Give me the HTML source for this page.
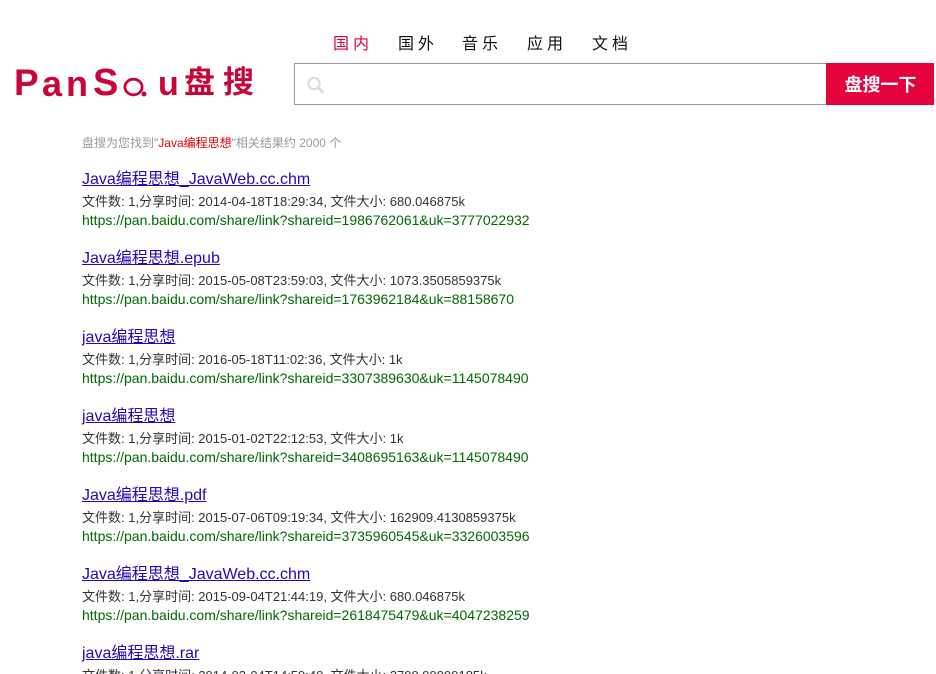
<!DOCTYPE html>
<html lang="zh">
<head>
<meta charset="utf-8">
<title>盘搜</title>
<style>
html,body{margin:0;padding:0;background:#fff;width:936px;height:674px;overflow:hidden;}
#p{width:936px;height:674px;overflow:hidden;position:relative;font-family:"Liberation Sans","Noto Sans CJK SC",sans-serif;}
.a{position:absolute;white-space:nowrap;}
.nav{font-size:16px;letter-spacing:4px;top:35px;line-height:20px;color:#111;}
.logo{color:#c8063a;font-weight:bold;font-size:36px;line-height:40px;top:64px;}
.cjk{font-size:31px;top:63px;line-height:33px;color:#c8063a;font-weight:bold;font-family:"Noto Sans CJK SC",sans-serif;}
.t{left:82px;font-size:16px;line-height:20px;color:#200bb5;text-decoration:underline;}
.m{left:82px;font-size:13px;line-height:16px;color:#333;}
.u{left:82px;font-size:14px;line-height:18px;color:#006a00;}
</style>
</head>
<body>
<div id="p">
<span class="a logo" style="left:14px;font-size:37px;top:63px;">P</span>
<span class="a logo" style="left:42px;">a</span>
<span class="a logo" style="left:66px;">n</span>
<span class="a logo" style="left:93px;font-size:38px;top:63px;">S</span>
<svg class="a" style="left:120px;top:70px;" width="32" height="32" viewBox="0 0 32 32">
<ellipse cx="13.5" cy="17" rx="8.6" ry="7.8" fill="none" stroke="#c8063a" stroke-width="2.8"/>
<circle cx="24" cy="24" r="2.5" fill="#c8063a"/>
</svg>
<span class="a logo" style="left:158px;font-size:34px;">u</span>
<span class="a cjk" style="left:184px;">盘</span>
<span class="a cjk" style="left:223px;">搜</span>

<span class="a nav" style="left:333px;color:#d6073e;">国内</span>
<span class="a nav" style="left:398px;">国外</span>
<span class="a nav" style="left:462px;">音乐</span>
<span class="a nav" style="left:527px;">应用</span>
<span class="a nav" style="left:592px;">文档</span>

<div class="a" style="left:294px;top:63px;width:532px;height:40px;border:1px solid #999;border-right:none;"></div>
<svg class="a" style="left:305px;top:75px;" width="20" height="20" viewBox="0 0 20 20">
<circle cx="9" cy="8.5" r="5.6" fill="none" stroke="#dcdcdc" stroke-width="2.2"/>
<path d="M13 12.5l4.5 4.5" stroke="#dcdcdc" stroke-width="2.8" stroke-linecap="round"/>
</svg>
<div class="a" style="left:826px;top:63px;width:108px;height:42px;background:#e4033c;color:#fff;font-size:18px;font-weight:bold;line-height:44px;text-align:center;text-indent:1px;">盘搜一下</div>

<div class="a" style="left:82px;top:135px;font-size:12px;line-height:16px;color:#999;">盘搜为您找到"<span style="color:#e00000;">Java编程思想</span>"相关结果约 2000 个</div>

<a class="a t" style="top:170px;">Java编程思想_JavaWeb.cc.chm</a>
<div class="a m" style="top:194px;">文件数: 1,分享时间: 2014-04-18T18:29:34, 文件大小: 680.046875k</div>
<div class="a u" style="top:211px;">https://pan.baidu.com/share/link?shareid=1986762061&amp;uk=3777022932</div>

<a class="a t" style="top:249px;">Java编程思想.epub</a>
<div class="a m" style="top:273px;">文件数: 1,分享时间: 2015-05-08T23:59:03, 文件大小: 1073.3505859375k</div>
<div class="a u" style="top:290px;">https://pan.baidu.com/share/link?shareid=1763962184&amp;uk=88158670</div>

<a class="a t" style="top:328px;">java编程思想</a>
<div class="a m" style="top:352px;">文件数: 1,分享时间: 2016-05-18T11:02:36, 文件大小: 1k</div>
<div class="a u" style="top:369px;">https://pan.baidu.com/share/link?shareid=3307389630&amp;uk=1145078490</div>

<a class="a t" style="top:407px;">java编程思想</a>
<div class="a m" style="top:431px;">文件数: 1,分享时间: 2015-01-02T22:12:53, 文件大小: 1k</div>
<div class="a u" style="top:448px;">https://pan.baidu.com/share/link?shareid=3408695163&amp;uk=1145078490</div>

<a class="a t" style="top:486px;">Java编程思想.pdf</a>
<div class="a m" style="top:510px;">文件数: 1,分享时间: 2015-07-06T09:19:34, 文件大小: 162909.4130859375k</div>
<div class="a u" style="top:527px;">https://pan.baidu.com/share/link?shareid=3735960545&amp;uk=3326003596</div>

<a class="a t" style="top:565px;">Java编程思想_JavaWeb.cc.chm</a>
<div class="a m" style="top:589px;">文件数: 1,分享时间: 2015-09-04T21:44:19, 文件大小: 680.046875k</div>
<div class="a u" style="top:606px;">https://pan.baidu.com/share/link?shareid=2618475479&amp;uk=4047238259</div>

<a class="a t" style="top:644px;">java编程思想.rar</a>
<div class="a m" style="top:668px;">文件数: 1,分享时间: 2014-03-04T14:59:40, 文件大小: 2799.99999185k</div>
</div>
</body>
</html>
